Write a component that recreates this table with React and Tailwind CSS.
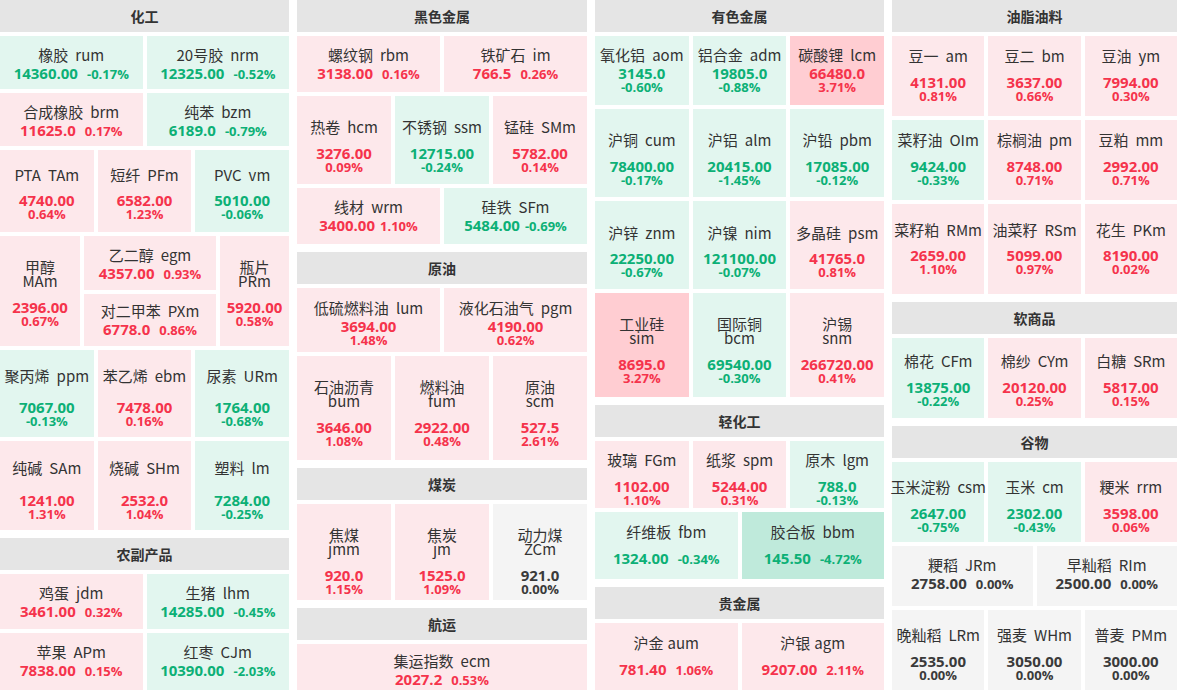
import React from "react";

const bg = {
  up: "bg-[#fde8eb]",
  up2: "bg-[#ffcdd2]",
  dn: "bg-[#e2f6ef]",
  dn2: "bg-[#bfeadb]",
  flat: "bg-[#f4f4f4]",
};
const fg = {
  up: "text-[#f5334b]",
  up2: "text-[#f5334b]",
  dn: "text-[#0cb076]",
  dn2: "text-[#0cb076]",
  flat: "text-[#3a3a3a]",
};

function tone(p) {
  const x = parseFloat(p);
  if (x >= 3) return "up2";
  if (x > 0) return "up";
  if (x <= -3) return "dn2";
  if (x < 0) return "dn";
  return "flat";
}

const c = (n, code, v, p, extra = {}) => ({ n, code, v, p, ...extra });

const columns = [
  {
    w: "w-[289px]",
    sections: [
      {
        title: "化工",
        rows: [
          { h: "h-[53px]", mode: "inline", gap: "mt-[4px]", pad: "pt-[3px]", cells: [c("橡胶", "rum", "14360.00", "-0.17%"), c("20号胶", "nrm", "12325.00", "-0.52%")] },
          { h: "h-[53px]", mode: "inline", gap: "mt-[4px]", pad: "pt-[4px]", cells: [c("合成橡胶", "brm", "11625.0", "0.17%"), c("纯苯", "bzm", "6189.0", "-0.79%")] },
          { h: "h-[82px]", mode: "stack", gap: "mt-[11px]", pad: "pt-[7px]", cells: [c("PTA", "TAm", "4740.00", "0.64%"), c("短纤", "PFm", "6582.00", "1.23%"), c("PVC", "vm", "5010.00", "-0.06%")] },
          {
            h: "h-[110px]",
            mode: "split",
            gap: "mt-[12px]",
            pad: "pt-[5px]",
            cells: [
              c("甲醇", "MAm", "2396.00", "0.67%", { w: "w-[80px]" }),
              {
                col: [
                  c("乙二醇", "egm", "4357.00", "0.93%", { mode: "inline", gap: "mt-[4px]", pad: "pt-[3px]" }),
                  c("对二甲苯", "PXm", "6778.0", "0.86%", { mode: "inline", gap: "mt-[4px]", pad: "pt-[2px]" }),
                ],
              },
              c("瓶片", "PRm", "5920.00", "0.58%", { w: "w-[69px]" }),
            ],
          },
          { h: "h-[87px]", mode: "stack", gap: "mt-[17px]", pad: "pt-[9px]", cells: [c("聚丙烯", "ppm", "7067.00", "-0.13%"), c("苯乙烯", "ebm", "7478.00", "0.16%"), c("尿素", "URm", "1764.00", "-0.68%")] },
          { h: "h-[89px]", mode: "stack", gap: "mt-[18px]", pad: "pt-[10px]", cells: [c("纯碱", "SAm", "1241.00", "1.31%"), c("烧碱", "SHm", "2532.0", "1.04%"), c("塑料", "lm", "7284.00", "-0.25%")] },
        ],
      },
      {
        title: "农副产品",
        rows: [
          { h: "h-[55px]", mode: "inline", gap: "mt-[4px]", pad: "pt-[2px]", cells: [c("鸡蛋", "jdm", "3461.00", "0.32%"), c("生猪", "lhm", "14285.00", "-0.45%")] },
          { h: "h-[57px]", mode: "inline", gap: "mt-[4px]", pad: "", cells: [c("苹果", "APm", "7838.00", "0.15%"), c("红枣", "CJm", "10390.00", "-2.03%")] },
        ],
      },
    ],
  },
  {
    w: "w-[290px]",
    sections: [
      {
        title: "黑色金属",
        rows: [
          { h: "h-[56px]", mode: "inline", gap: "mt-[4px]", pad: "", cells: [c("螺纹钢", "rbm", "3138.00", "0.16%"), c("铁矿石", "im", "766.5", "0.26%")] },
          { h: "h-[88px]", mode: "stack", gap: "mt-[12px]", pad: "pt-[13px]", cells: [c("热卷", "hcm", "3276.00", "0.09%"), c("不锈钢", "ssm", "12715.00", "-0.24%"), c("锰硅", "SMm", "5782.00", "0.14%")] },
          { h: "h-[56px]", mode: "inline", gap: "mt-[4px]", pad: "", vg: "ml-[5px]", cells: [c("线材", "wrm", "3400.00", "1.10%"), c("硅铁", "SFm", "5484.00", "-0.69%")] },
        ],
      },
      {
        title: "原油",
        rows: [
          { h: "h-[64px]", mode: "stack", gap: "mt-[4px]", pad: "pt-[7px]", cells: [c("低硫燃料油", "lum", "3694.00", "1.48%"), c("液化石油气", "pgm", "4190.00", "0.62%")] },
          { h: "h-[104px]", mode: "split", gap: "mt-[12px]", pad: "pt-[11px]", cells: [c("石油沥青", "bum", "3646.00", "1.08%"), c("燃料油", "fum", "2922.00", "0.48%"), c("原油", "scm", "527.5", "2.61%")] },
        ],
      },
      {
        title: "煤炭",
        rows: [
          { h: "h-[96px]", mode: "split", gap: "mt-[12px]", pad: "pt-[20px]", cells: [c("焦煤", "jmm", "920.0", "1.15%"), c("焦炭", "jm", "1525.0", "1.09%"), c("动力煤", "ZCm", "921.0", "0.00%")] },
        ],
      },
      {
        title: "航运",
        rows: [
          { h: "h-[50px]", mode: "inline", gap: "mt-[4px]", pad: "pt-[2px]", cells: [c("集运指数", "ecm", "2027.2", "0.53%")] },
        ],
      },
    ],
  },
  {
    w: "w-[289px]",
    sections: [
      {
        title: "有色金属",
        rows: [
          { h: "h-[69px]", mode: "stack", gap: "mt-[4px]", pad: "", cells: [c("氧化铝", "aom", "3145.0", "-0.60%"), c("铝合金", "adm", "19805.0", "-0.88%"), c("碳酸锂", "lcm", "66480.0", "3.71%")] },
          { h: "h-[88px]", mode: "stack", gap: "mt-[12px]", pad: "pt-[14px]", cells: [c("沪铜", "cum", "78400.00", "-0.17%"), c("沪铝", "alm", "20415.00", "-1.45%"), c("沪铅", "pbm", "17085.00", "-0.12%")] },
          { h: "h-[88px]", mode: "stack", gap: "mt-[11px]", pad: "pt-[14px]", cells: [c("沪锌", "znm", "22250.00", "-0.67%"), c("沪镍", "nim", "121100.00", "-0.07%"), c("多晶硅", "psm", "41765.0", "0.81%")] },
          { h: "h-[104px]", mode: "split", gap: "mt-[12px]", pad: "pt-[12px]", cells: [c("工业硅", "sim", "8695.0", "3.27%"), c("国际铜", "bcm", "69540.00", "-0.30%"), c("沪锡", "snm", "266720.00", "0.41%")] },
        ],
      },
      {
        title: "轻化工",
        rows: [
          { h: "h-[67px]", mode: "stack", gap: "mt-[12px]", pad: "pt-[11px]", cells: [c("玻璃", "FGm", "1102.00", "1.10%"), c("纸浆", "spm", "5244.00", "0.31%"), c("原木", "lgm", "788.0", "-0.13%")] },
          { h: "h-[67px]", mode: "inline", gap: "mt-[12px]", pad: "", cells: [c("纤维板", "fbm", "1324.00", "-0.34%"), c("胶合板", "bbm", "145.50", "-4.72%")] },
        ],
      },
      {
        title: "贵金属",
        rows: [
          { h: "h-[67px]", mode: "inline", gap: "mt-[12px]", pad: "", sp: true, cells: [c("沪金", "aum", "781.40", "1.06%"), c("沪银", "agm", "9207.00", "2.11%")] },
        ],
      },
    ],
  },
  {
    w: "flex-1",
    sections: [
      {
        title: "油脂油料",
        rows: [
          { h: "h-[80px]", mode: "stack", gap: "mt-[12px]", pad: "", cells: [c("豆一", "am", "4131.00", "0.81%"), c("豆二", "bm", "3637.00", "0.66%"), c("豆油", "ym", "7994.00", "0.30%")] },
          { h: "h-[80px]", mode: "stack", gap: "mt-[12px]", pad: "", cells: [c("菜籽油", "OIm", "9424.00", "-0.33%"), c("棕榈油", "pm", "8748.00", "0.71%"), c("豆粕", "mm", "2992.00", "0.71%")] },
          { h: "h-[90px]", mode: "stack", gap: "mt-[11px]", pad: "", cells: [c("菜籽粕", "RMm", "2659.00", "1.10%"), c("油菜籽", "RSm", "5099.00", "0.97%"), c("花生", "PKm", "8190.00", "0.02%")] },
        ],
      },
      {
        title: "软商品",
        rows: [
          { h: "h-[80px]", mode: "stack", gap: "mt-[12px]", pad: "pt-[6px]", cells: [c("棉花", "CFm", "13875.00", "-0.22%"), c("棉纱", "CYm", "20120.00", "0.25%"), c("白糖", "SRm", "5817.00", "0.15%")] },
        ],
      },
      {
        title: "谷物",
        rows: [
          { h: "h-[80px]", mode: "stack", gap: "mt-[12px]", pad: "pt-[9px]", cells: [c("玉米淀粉", "csm", "2647.00", "-0.75%"), c("玉米", "cm", "2302.00", "-0.43%"), c("粳米", "rrm", "3598.00", "0.06%")] },
          { h: "h-[60px]", mode: "inline", gap: "mt-[4px]", pad: "pb-[4px]", cells: [c("粳稻", "JRm", "2758.00", "0.00%"), c("早籼稻", "RIm", "2500.00", "0.00%")] },
          { h: "h-[80px]", mode: "stack", gap: "mt-[12px]", pad: "pt-[10px]", cells: [c("晚籼稻", "LRm", "2535.00", "0.00%"), c("强麦", "WHm", "3050.00", "0.00%"), c("普麦", "PMm", "3000.00", "0.00%")] },
        ],
      },
    ],
  },
];

function Tile({ d, mode, gap, pad, vg, sp, className }) {
  const t = tone(d.p);
  return (
    <div className={`flex flex-col items-center justify-center min-w-0 ${bg[t]} ${pad} ${className}`}>
      {mode === "split" ? (
        <div className="text-center text-[15px] leading-[14px] text-[#333333]">
          <div>{d.n}</div>
          <div>{d.code}</div>
        </div>
      ) : (
        <div className="whitespace-nowrap text-[15px] leading-[14px] text-[#333333]">
          {d.n}
          <span className={sp ? "ml-[4px]" : "ml-[7px]"}>{d.code}</span>
        </div>
      )}
      {mode === "inline" ? (
        <div className={`flex items-baseline whitespace-nowrap font-['Open_Sans',sans-serif] font-bold leading-[14px] ${gap} ${fg[t]}`}>
          <span className="text-[15px]">{d.v}</span>
          <span className={`text-[13px] ${vg || "ml-[9px]"}`}>{d.p}</span>
        </div>
      ) : (
        <div className={`flex flex-col items-center whitespace-nowrap font-['Open_Sans',sans-serif] font-bold leading-[14px] ${gap} ${fg[t]}`}>
          <span className="text-[15px]">{d.v}</span>
          <span className="text-[13px]">{d.p}</span>
        </div>
      )}
    </div>
  );
}

function Row({ row }) {
  return (
    <div className={`flex gap-1 shrink-0 ${row.h}`}>
      {row.cells.map((d, i) =>
        d.col ? (
          <div key={i} className="flex flex-1 min-w-0 flex-col gap-1">
            {d.col.map((e, j) => (
              <Tile key={j} d={e} mode={e.mode} gap={e.gap} pad={e.pad} className="flex-1" />
            ))}
          </div>
        ) : (
          <Tile
            key={i}
            d={d}
            mode={d.mode || row.mode}
            gap={d.gap || row.gap}
            pad={d.pad ?? row.pad}
            vg={row.vg}
            sp={row.sp}
            className={d.w || "flex-1"}
          />
        )
      )}
    </div>
  );
}

export default function App() {
  return (
    <div className="flex gap-2 w-[1177px] h-[690px] overflow-hidden bg-white font-['Noto_Sans_CJK_SC',sans-serif]">
      {columns.map((col, i) => (
        <div key={i} className={`flex flex-col gap-2 shrink-0 ${col.w}`}>
          {col.sections.map((s) => (
            <div key={s.title} className="flex flex-col gap-1">
              <div className="h-8 shrink-0 flex items-center justify-center bg-[#e5e5e5] text-[14px] font-bold text-[#333333]">
                {s.title}
              </div>
              {s.rows.map((r, k) => (
                <Row key={k} row={r} />
              ))}
            </div>
          ))}
        </div>
      ))}
    </div>
  );
}
